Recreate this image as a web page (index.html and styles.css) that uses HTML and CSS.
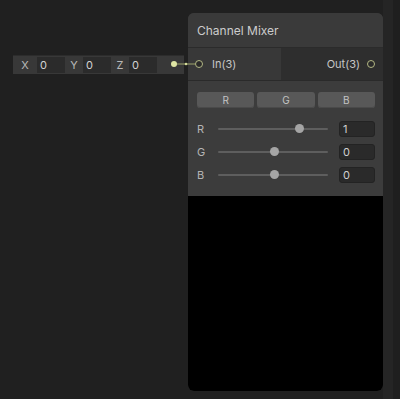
FILE: index.html
```html
<html>
<head>
<link rel="stylesheet" href="styles.css">
</head>
<body>
	<div class="canvas">
		<!--vector input widget-->
		<div class="vec">
			<span class="vecLabel first">X</span><span class="vecField">0</span>
			<span class="vecLabel">Y</span><span class="vecField">0</span>
			<span class="vecLabel">Z</span><span class="vecField">0</span>
		</div>

		<!--node-->
		<div class="node">
			<div class="nodeTitle">Channel Mixer</div>
			<div class="ports">
				<div class="inputs">
					<span class="port"></span><span class="portName">In(3)</span>
				</div>
				<div class="outputs">
					<span class="portName">Out(3)</span><span class="port"></span>
				</div>
			</div>
			<div class="controls">
				<div class="tabs">
					<div class="tab">R</div>
					<div class="tab">G</div>
					<div class="tab">B</div>
				</div>
				<div class="sliderRow">
					<span class="sliderLabel">R</span>
					<div class="track"><span class="thumb" style="left: 74%"></span></div>
					<span class="numField">1</span>
				</div>
				<div class="sliderRow">
					<span class="sliderLabel">G</span>
					<div class="track"><span class="thumb" style="left: 51%"></span></div>
					<span class="numField">0</span>
				</div>
				<div class="sliderRow">
					<span class="sliderLabel">B</span>
					<div class="track"><span class="thumb" style="left: 51%"></span></div>
					<span class="numField">0</span>
				</div>
			</div>
			<div class="preview"></div>
		</div>

		<!--edge from widget to In port-->
		<svg class="wire" width="40" height="12" viewBox="0 0 40 12">
			<line x1="4" y1="6" x2="26" y2="6" stroke="#9da36c" stroke-width="1"/>
			<circle cx="4" cy="6" r="3" fill="#dfe6a4"/>
			<circle cx="16" cy="6" r="1.3" fill="#d4da98"/>
		</svg>
	</div>
</body>
</html>
```

FILE: styles.css
```css
body {
	margin: 0;
	background-color: #202020;
	font-family: "Inter", "Liberation Sans", sans-serif;
}

.canvas {
	position: relative;
	width: 400px;
	height: 399px;
	overflow: hidden;
	background: linear-gradient(to right, #202020 383px, #252525 383px, #252525 393px, #1f1f1f 393px);
}

/* vector widget */
.vec {
	position: absolute;
	left: 13px;
	top: 55px;
	width: 171px;
	height: 19px;
	box-sizing: border-box;
	display: flex;
	align-items: center;
	background-color: #383838;
	border-top: 1px solid #2c2c2c;
}

.vecLabel {
	width: 18px;
	text-align: center;
	font-size: 11px;
	color: #b8b8b8;
}

.vecLabel.first {
	width: 24px;
}

.vecField {
	width: 28px;
	height: 16px;
	box-sizing: border-box;
	padding-left: 3px;
	line-height: 16px;
	font-size: 11px;
	color: #d2d2d2;
	background-color: #2b2b2b;
}

.wire {
	position: absolute;
	left: 170px;
	top: 58px;
}

/* node */
.node {
	position: absolute;
	left: 188px;
	top: 13px;
	width: 195px;
	height: 378px;
	display: flex;
	flex-direction: column;
	border-radius: 6px;
	overflow: hidden;
	background-color: #393939;
}

.nodeTitle {
	height: 35px;
	box-sizing: border-box;
	padding-left: 9px;
	line-height: 35px;
	font-size: 12px;
	color: #cccccc;
	background-color: #3a3a3a;
	border-bottom: 1px solid #2b2b2b;
}

.ports {
	display: flex;
	height: 33px;
	box-sizing: border-box;
	border-bottom: 1px solid #2a2a2a;
}

.inputs {
	width: 93px;
	display: flex;
	align-items: center;
	padding-left: 7px;
	box-sizing: border-box;
	background-color: #383838;
}

.outputs {
	flex: 1;
	display: flex;
	align-items: center;
	justify-content: flex-end;
	padding-right: 8px;
	background-color: #2e2e2e;
}

.port {
	width: 8px;
	height: 8px;
	box-sizing: border-box;
	border: 1.3px solid #b3b784;
	border-radius: 50%;
	background-color: #2a2a2a;
}

.inputs .portName {
	margin-left: 9px;
}

.outputs .portName {
	margin-right: 7px;
}

.portName {
	font-size: 11px;
	color: #c6c6c6;
}

.controls {
	display: flex;
	flex-direction: column;
	gap: 7px;
	padding: 11px 8px 13px 9px;
	background-color: #3c3c3c;
}

.tabs {
	display: flex;
	gap: 3px;
	margin-bottom: 6px;
}

.tab {
	flex: 1;
	height: 16px;
	line-height: 16px;
	text-align: center;
	font-size: 10px;
	color: #c4c4c4;
	background-color: #585858;
	border-radius: 3px;
	box-shadow: inset 0 -1px 0 #4a4a4a;
}

.sliderRow {
	display: flex;
	align-items: center;
	height: 16px;
}

.sliderLabel {
	width: 21px;
	font-size: 11px;
	color: #b4b4b4;
}

.track {
	position: relative;
	width: 110px;
	height: 2px;
	background-color: #5e5e5e;
	border-radius: 1px;
}

.thumb {
	position: absolute;
	top: -4px;
	width: 9px;
	height: 9px;
	margin-left: -4px;
	border-radius: 50%;
	background-color: #a5a5a5;
}

.numField {
	margin-left: auto;
	width: 36px;
	height: 16px;
	box-sizing: border-box;
	padding-left: 3px;
	line-height: 14px;
	font-size: 11px;
	color: #d0d0d0;
	background-color: #2a2a2a;
	border: 1px solid #232323;
	border-radius: 3px;
}

.preview {
	flex: 1;
	background-color: #000000;
}
```
